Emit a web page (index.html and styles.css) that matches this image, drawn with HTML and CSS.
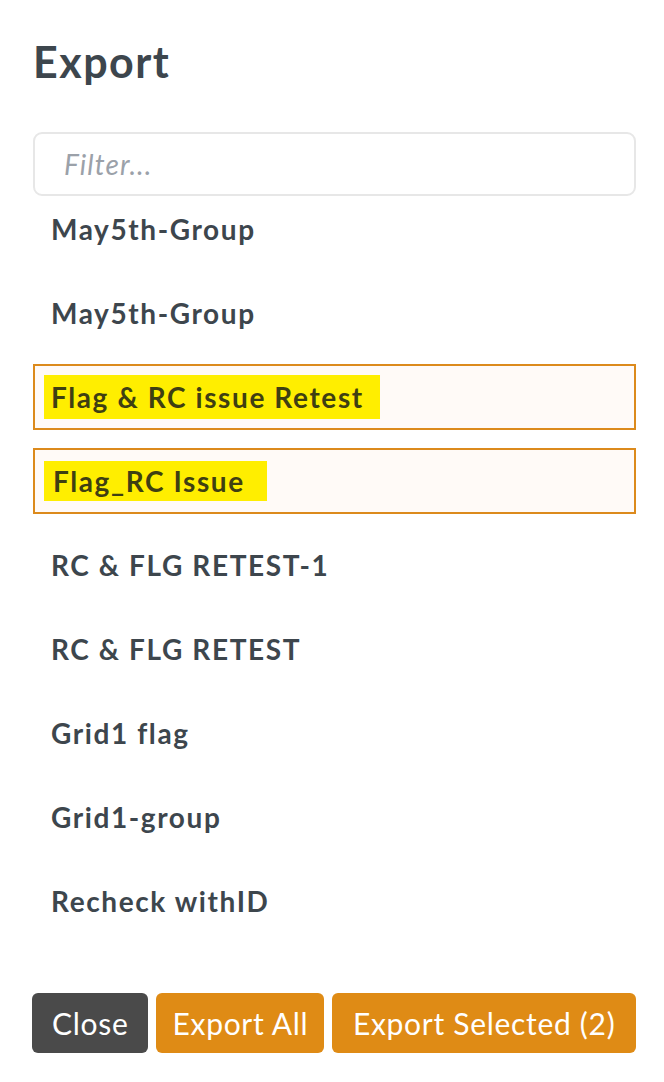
FILE: index.html
```html
<!DOCTYPE html>
<html>
<head>
<meta charset="utf-8">
<link rel="stylesheet" href="styles.css">
</head>
<body>
<div class="modal">
  <h1 class="title">Export</h1>
  <div class="filter"><span class="placeholder">Filter...</span></div>
  <ul class="list">
    <li class="row">May5th-Group</li>
    <li class="row">May5th-Group</li>
    <li class="row selected"><span class="hl">Flag &amp; RC issue Retest</span></li>
    <li class="row selected"><span class="hl hl2">Flag_RC Issue</span></li>
    <li class="row">RC &amp; FLG RETEST-1</li>
    <li class="row">RC &amp; FLG RETEST</li>
    <li class="row">Grid1 flag</li>
    <li class="row">Grid1-group</li>
    <li class="row">Recheck withID</li>
  </ul>
  <div class="actions">
    <button class="btn btn-dark">Close</button>
    <button class="btn btn-orange btn-all">Export All</button>
    <button class="btn btn-orange btn-grow">Export Selected (2)</button>
  </div>
</div>
</body>
</html>
```
FILE: styles.css
```css
html, body {
  margin: 0;
  padding: 0;
  background: #ffffff;
}
body {
  font-family: Lato, "Open Sans", "Liberation Sans", sans-serif;
  color: #3d464d;
}
.modal {
  padding: 0 28px 0 33px;
  height: 1082px;
  box-sizing: border-box;
}
.title {
  margin: 0;
  padding-top: 37px;
  height: 94px;
  box-sizing: border-box;
  font-size: 43px;
  font-weight: 700;
  line-height: 50px;
  color: #3d464d;
  letter-spacing: 1.5px;
}
.filter {
  margin-top: 38px;
  height: 64px;
  box-sizing: border-box;
  border: 2px solid #e7e7e7;
  border-radius: 9px;
  display: flex;
  align-items: center;
  padding-left: 29px;
}
.placeholder {
  font-style: italic;
  font-size: 28px;
  letter-spacing: 1.1px;
  color: #9ba1a9;
}
.list {
  list-style: none;
  margin: 0;
  padding: 0;
  display: flex;
  flex-direction: column;
  gap: 18px;
}
.row {
  height: 66px;
  box-sizing: border-box;
  border: 2px solid transparent;
  display: flex;
  align-items: center;
  padding-left: 16px;
  font-size: 28px;
  font-weight: 700;
  letter-spacing: 1.6px;
  color: #3d464d;
}
.row.selected {
  border-color: #dc8a1c;
  background: #fffaf7;
  padding-left: 9px;
}
.hl {
  background: #ffee00;
  color: #3f3f12;
  padding: 5px 16px 5px 7px;
}
.hl2 {
  padding: 3px 22px 3px 9px;
}
.actions {
  margin-top: 59px;
  margin-left: -1px;
  display: flex;
  gap: 8px;
}
.btn {
  height: 60px;
  border: none;
  border-radius: 6px;
  font-family: Lato, "Open Sans", "Liberation Sans", sans-serif;
  font-size: 30px;
  font-weight: 400;
  letter-spacing: 0.7px;
  color: #ffffff;
  padding: 0 18px;
  cursor: pointer;
}
.btn-dark {
  background: #4a4a4a;
  padding: 0 20px;
}
.btn-orange {
  background: #df8b15;
}
.btn-all {
  padding: 0 16px;
}
.btn-grow {
  flex: 1;
}
```
